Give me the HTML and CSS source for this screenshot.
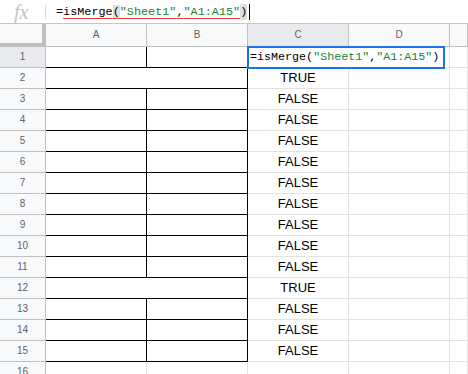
FILE: index.html
```html
<!DOCTYPE html>
<html lang="en">
  <head>
    <meta charset="UTF-8" />
    <title>isMerge</title>
    <link rel="stylesheet" href="styles.css">
  </head>
  <body>
    <div class="formula-bar">
      <span class="fx">fx</span>
      <span class="divider"></span>
      <div class="formula">=<span class="squiggle">isMerge<span class="paren">(</span><span class="str">"Sheet1"</span>,<span class="str">"A1:A15"</span></span><span class="paren">)</span><span class="caret"></span></div>
    </div>

    <div class="sheet">
      <div class="corner"></div>
      <div class="col-head">A</div>
      <div class="col-head">B</div>
      <div class="col-head active">C</div>
      <div class="col-head">D</div>
      <div class="col-head"></div>

      <div class="row-head active">1</div>
      <div class="cell ruled"></div><div class="cell ruled"></div>
      <div class="cell value"></div><div class="cell"></div><div class="cell"></div>

      <div class="row-head">2</div>
      <div class="cell ruled merged"></div>
      <div class="cell value">TRUE</div><div class="cell"></div><div class="cell"></div>

      <div class="row-head">3</div>
      <div class="cell ruled"></div><div class="cell ruled"></div>
      <div class="cell value">FALSE</div><div class="cell"></div><div class="cell"></div>

      <div class="row-head">4</div>
      <div class="cell ruled"></div><div class="cell ruled"></div>
      <div class="cell value">FALSE</div><div class="cell"></div><div class="cell"></div>

      <div class="row-head">5</div>
      <div class="cell ruled"></div><div class="cell ruled"></div>
      <div class="cell value">FALSE</div><div class="cell"></div><div class="cell"></div>

      <div class="row-head">6</div>
      <div class="cell ruled"></div><div class="cell ruled"></div>
      <div class="cell value">FALSE</div><div class="cell"></div><div class="cell"></div>

      <div class="row-head">7</div>
      <div class="cell ruled"></div><div class="cell ruled"></div>
      <div class="cell value">FALSE</div><div class="cell"></div><div class="cell"></div>

      <div class="row-head">8</div>
      <div class="cell ruled"></div><div class="cell ruled"></div>
      <div class="cell value">FALSE</div><div class="cell"></div><div class="cell"></div>

      <div class="row-head">9</div>
      <div class="cell ruled"></div><div class="cell ruled"></div>
      <div class="cell value">FALSE</div><div class="cell"></div><div class="cell"></div>

      <div class="row-head">10</div>
      <div class="cell ruled"></div><div class="cell ruled"></div>
      <div class="cell value">FALSE</div><div class="cell"></div><div class="cell"></div>

      <div class="row-head">11</div>
      <div class="cell ruled"></div><div class="cell ruled"></div>
      <div class="cell value">FALSE</div><div class="cell"></div><div class="cell"></div>

      <div class="row-head">12</div>
      <div class="cell ruled merged"></div>
      <div class="cell value">TRUE</div><div class="cell"></div><div class="cell"></div>

      <div class="row-head">13</div>
      <div class="cell ruled"></div><div class="cell ruled"></div>
      <div class="cell value">FALSE</div><div class="cell"></div><div class="cell"></div>

      <div class="row-head">14</div>
      <div class="cell ruled"></div><div class="cell ruled"></div>
      <div class="cell value">FALSE</div><div class="cell"></div><div class="cell"></div>

      <div class="row-head">15</div>
      <div class="cell ruled"></div><div class="cell ruled"></div>
      <div class="cell value">FALSE</div><div class="cell"></div><div class="cell"></div>

      <div class="row-head">16</div>
      <div class="cell"></div><div class="cell"></div>
      <div class="cell value"></div><div class="cell"></div><div class="cell"></div>

      <div class="editor">=isMerge(<span class="str">"Sheet1"</span>,<span class="str">"A1:A15"</span>)</div>
    </div>
  </body>
</html>
```

FILE: styles.css
```css
* {
  box-sizing: border-box;
}

body {
  margin: 0;
  background: #fff;
  font-family: Arial, "Liberation Sans", sans-serif;
  overflow: hidden;
}

.formula-bar {
  display: flex;
  align-items: center;
  height: 24px;
  border-bottom: 1px solid #c7c7c7;
}

.fx {
  width: 45px;
  padding-left: 14px;
  font-family: "Liberation Serif", serif;
  font-style: italic;
  font-size: 20px;
  color: #c4c4c4;
  line-height: 22px;
}

.divider {
  width: 1px;
  height: 14px;
  background: #dadada;
}

.formula {
  margin-left: 10px;
  font-family: "Liberation Mono", monospace;
  font-size: 11.8px;
  color: #000;
  line-height: 16px;
  display: flex;
  align-items: center;
  white-space: pre;
}

.squiggle {
  text-decoration: underline solid #e53935;
  text-decoration-thickness: 1px;
  text-underline-offset: 3px;
}

.paren {
  background: #dedede;
}

.str {
  color: #188038;
}

.caret {
  width: 1px;
  height: 16px;
  margin-left: 2px;
  background: #000;
}

.sheet {
  position: relative;
  display: grid;
  grid-template-columns: 46px 101px 101px 101px 101px 1fr;
  grid-template-rows: 23px repeat(16, 21px);
}

.corner {
  background: #f8f9fa;
  border-right: 4px solid #c0c0c0;
  border-bottom: 4px solid #c0c0c0;
}

.col-head {
  background: #f8f9fa;
  border-right: 1px solid #c0c0c0;
  border-bottom: 1px solid #c0c0c0;
  font-size: 10px;
  color: #5f6368;
  text-align: center;
  line-height: 22px;
}

.row-head {
  background: #f8f9fa;
  border-right: 1px solid #c0c0c0;
  border-bottom: 1px solid #c0c0c0;
  font-size: 10px;
  color: #5f6368;
  text-align: center;
  line-height: 20px;
}

.col-head.active,
.row-head.active {
  background: #e8eaed;
}

.cell {
  border-right: 1px solid #e2e2e2;
  border-bottom: 1px solid #e2e2e2;
}

.cell.ruled {
  border-right-color: #000;
  border-bottom-color: #000;
}

.cell.merged {
  grid-column: span 2;
}

.cell.value {
  font-size: 13px;
  color: #000;
  text-align: center;
  line-height: 20px;
}

.editor {
  position: absolute;
  left: 247px;
  top: 22px;
  width: 198px;
  height: 23px;
  border: 2px solid #1a73e8;
  background: #fff;
  padding-left: 1px;
  font-family: "Liberation Mono", monospace;
  font-size: 11.7px;
  line-height: 19px;
  color: #000;
  white-space: pre;
}
```
